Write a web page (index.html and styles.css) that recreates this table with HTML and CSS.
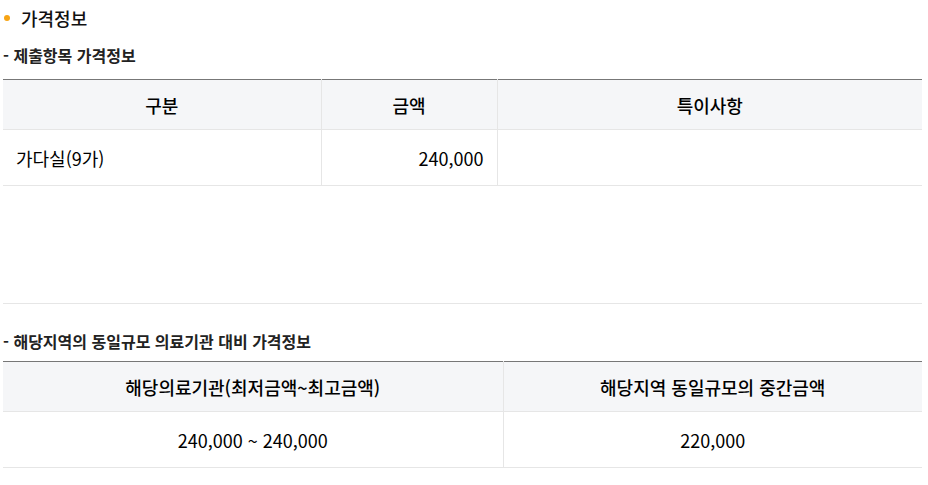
FILE: index.html
```html
<!DOCTYPE html>
<html lang="ko">
<head>
<meta charset="utf-8">
<link rel="stylesheet" href="styles.css">
</head>
<body>
<div class="page">
  <h2 class="title"><span class="dot"></span>가격정보</h2>
  <h3 class="sub sub-first">- 제출항목 가격정보</h3>
  <div class="tbl-wrap">
    <table class="tbl">
      <colgroup><col style="width:318px"><col style="width:176px"><col></colgroup>
      <thead>
        <tr><th>구분</th><th>금액</th><th>특이사항</th></tr>
      </thead>
      <tbody>
        <tr><td class="left">가다실(9가)</td><td class="right">240,000</td><td></td></tr>
      </tbody>
    </table>
  </div>
  <h3 class="sub sub-second">- 해당지역의 동일규모 의료기관 대비 가격정보</h3>
  <table class="tbl">
    <colgroup><col style="width:500px"><col></colgroup>
    <thead>
      <tr><th>해당의료기관(최저금액~최고금액)</th><th>해당지역 동일규모의 중간금액</th></tr>
    </thead>
    <tbody>
      <tr><td class="center">240,000 ~ 240,000</td><td class="center">220,000</td></tr>
    </tbody>
  </table>
</div>
</body>
</html>
```

FILE: styles.css
```css
* { box-sizing: border-box; }
html, body { margin: 0; padding: 0; background: #fff; }
body {
  font-family: "Noto Sans CJK KR", "Noto Sans", sans-serif;
  color: #111;
}
.page {
  width: 919px;
  margin-left: 3px;
}
.title {
  display: flex;
  align-items: center;
  margin: 0;
  height: 36px;
  line-height: 36px;
  font-size: 18px;
  font-weight: 500;
  color: #111;
}
.dot {
  width: 6px;
  height: 6px;
  border-radius: 50%;
  background: #f7a414;
  margin: 0 11px 0 1px;
}
.sub {
  margin: 0;
  font-size: 16px;
  font-weight: 700;
  line-height: 24px;
  letter-spacing: 0;
  color: #222;
}
.sub-first { margin-top: 7px; margin-bottom: 12px; }
.sub-second { margin-top: 25px; margin-bottom: 8px; }
.tbl-wrap {
  height: 225px;
  border-bottom: 1px solid #e6e6e6;
}
.tbl {
  width: 100%;
  border-collapse: collapse;
  table-layout: fixed;
  border-top: 1px solid #777;
}
.tbl th {
  height: 50px;
  background: #f5f6f8;
  font-size: 18px;
  font-weight: 500;
  color: #000;
  text-align: center;
  border-bottom: 1px solid #e6e6e6;
  border-left: 1px solid #e6e6e6;
  padding: 0;
}
.tbl td {
  height: 56px;
  font-size: 18px;
  color: #000;
  border-bottom: 1px solid #e6e6e6;
  border-left: 1px solid #e6e6e6;
  padding: 0 13px;
}
.tbl th:first-child, .tbl td:first-child { border-left: none; }
.left { text-align: left; }
.right { text-align: right; }
.center { text-align: center; }
```
